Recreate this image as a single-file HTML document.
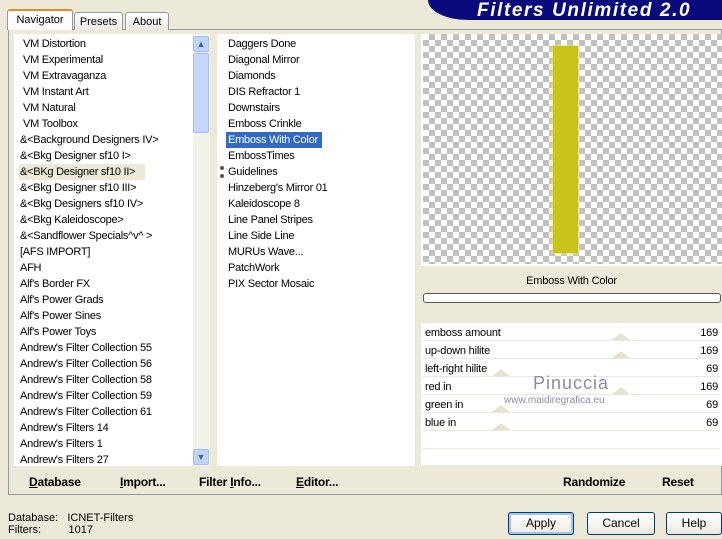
<!DOCTYPE html><html><head><style>
*{margin:0;padding:0;box-sizing:border-box}
body{width:722px;height:539px;background:#ece9d8;font-family:"Liberation Sans",sans-serif;font-size:11px;color:#000;position:relative;overflow:hidden}
.a{position:absolute}
.tab{position:absolute;top:12px;height:18px;border:1px solid #919b9c;border-bottom:none;background:linear-gradient(#fff,#ecebe5);border-radius:3px 3px 0 0;text-align:center;line-height:17px;font-size:11px}
.list div{height:16px;line-height:16px;white-space:nowrap;letter-spacing:-0.25px}
.chk{background-color:#fff;background-image:linear-gradient(45deg,#c0c0c0 25%,transparent 25%,transparent 75%,#c0c0c0 75%),linear-gradient(45deg,#c0c0c0 25%,transparent 25%,transparent 75%,#c0c0c0 75%);background-size:12px 12px;background-position:0 0,6px 6px}
.row{position:absolute;left:422px;width:298px;height:17px;background:#fff;line-height:19px;border-bottom:1px solid #ece9d8;letter-spacing:-0.2px}
.row span{position:absolute;left:3px}.row b{position:absolute;right:2px;font-weight:normal}
.tri{position:absolute;width:0;height:0;border-left:9px solid transparent;border-right:9px solid transparent;border-bottom:7px solid #e6e2d2;bottom:0}
.btn{position:absolute;top:512px;height:23px;border:1px solid #003c74;border-radius:3px;background:linear-gradient(#fff,#ece9e0);text-align:center;line-height:21px;font-size:12px}
.bb{position:absolute;top:475px;font-weight:bold;font-size:12px;letter-spacing:-0.2px}
</style></head><body>
<div class="a" style="left:428px;top:0;width:294px;height:20px;background:#0a0a7d;border-radius:0 0 0 40px/0 0 0 20px"></div>
<div class="a" style="left:477px;top:0;font:italic bold 19px 'Liberation Sans',sans-serif;color:#fff;letter-spacing:1.6px">Filters Unlimited 2.0</div>
<div class="a" style="left:8px;top:29px;width:714px;height:466px;border:1px solid #919b9c;background:#fcfcfe"></div>
<div class="tab" style="left:7px;top:9px;width:66px;height:21px;background:#fcfcfe;border-top:2px solid #e68b2c;z-index:2;line-height:19px">Navigator</div>
<div class="tab" style="left:74px;width:49px;line-height:19px">Presets</div>
<div class="tab" style="left:125px;width:44px;line-height:19px">About</div>
<div class="a" style="left:9px;top:30px;width:712px;height:464px;background:#ece9d8"></div>
<div class="a list" style="left:14px;top:34px;width:180px;height:432px;background:#fff;padding-top:2px">
<div style="padding-left:9px">VM Distortion</div><div style="padding-left:9px">VM Experimental</div><div style="padding-left:9px">VM Extravaganza</div><div style="padding-left:9px">VM Instant Art</div><div style="padding-left:9px">VM Natural</div><div style="padding-left:9px">VM Toolbox</div>
<div style="padding-left:6px">&amp;&lt;Background Designers IV&gt;</div><div style="padding-left:6px">&amp;&lt;Bkg Designer sf10 I&gt;</div><div style="padding-left:6px;background:#ece9d8;width:126px;margin-left:5px;padding-left:1px">&amp;&lt;BKg Designer sf10 II&gt;</div><div style="padding-left:6px">&amp;&lt;Bkg Designer sf10 III&gt;</div><div style="padding-left:6px">&amp;&lt;Bkg Designers sf10 IV&gt;</div><div style="padding-left:6px">&amp;&lt;Bkg Kaleidoscope&gt;</div><div style="padding-left:6px">&amp;&lt;Sandflower Specials^v^ &gt;</div><div style="padding-left:6px">[AFS IMPORT]</div><div style="padding-left:6px">AFH</div><div style="padding-left:6px">Alf's Border FX</div><div style="padding-left:6px">Alf's Power Grads</div><div style="padding-left:6px">Alf's Power Sines</div><div style="padding-left:6px">Alf's Power Toys</div><div style="padding-left:6px">Andrew's Filter Collection 55</div><div style="padding-left:6px">Andrew's Filter Collection 56</div><div style="padding-left:6px">Andrew's Filter Collection 58</div><div style="padding-left:6px">Andrew's Filter Collection 59</div><div style="padding-left:6px">Andrew's Filter Collection 61</div><div style="padding-left:6px">Andrew's Filters 14</div><div style="padding-left:6px">Andrew's Filters 1</div><div style="padding-left:6px">Andrew's Filters 27</div>
</div>
<div class="a" style="left:193px;top:34px;width:17px;height:432px;background:#f3f2ea"></div>
<div class="a" style="left:193px;top:36px;width:16px;height:16px;background:#c1d3fb;border:1px solid #a8bdf2;border-radius:2px;text-align:center;font-size:9px;line-height:14px;color:#4d6185">&#9650;</div>
<div class="a" style="left:193px;top:53px;width:16px;height:80px;background:#c6d5fb;border:1px solid #a8bdf2;border-radius:2px"></div>
<div class="a" style="left:193px;top:449px;width:16px;height:16px;background:#c1d3fb;border:1px solid #a8bdf2;border-radius:2px;text-align:center;font-size:9px;line-height:14px;color:#4d6185">&#9660;</div>
<div class="a list" style="left:217px;top:34px;width:198px;height:432px;background:#fff;padding-top:2px;padding-left:11px">
<div>Daggers Done</div><div>Diagonal Mirror</div><div>Diamonds</div><div>DIS Refractor 1</div><div>Downstairs</div><div>Emboss Crinkle</div><div style="background:#316ac5;color:#fff;width:96px;margin-left:-2px;padding-left:2px">Emboss With Color</div><div>EmbossTimes</div><div>Guidelines</div><div>Hinzeberg's Mirror 01</div><div>Kaleidoscope 8</div><div>Line Panel Stripes</div><div>Line Side Line</div><div>MURUs Wave...</div><div>PatchWork</div><div>PIX Sector Mosaic</div>
</div>
<div class="a" style="left:220px;top:166px;width:4px;height:12px;border-top:4px dotted #555;border-bottom:4px dotted #555"></div>
<div class="a" style="left:421px;top:34px;width:301px;height:432px;background:#fff"></div>
<div class="a chk" style="left:423px;top:34px;width:299px;height:230px"></div>
<div class="a" style="left:553px;top:46px;width:25px;height:207px;background:#c9c41a;box-shadow:0 0 3px 1px #e4e080"></div>
<div class="a" style="left:421px;top:266px;width:301px;height:57px;background:#ece9d8"></div>
<div class="a" style="left:421px;top:275px;width:301px;text-align:center;font-size:11px;letter-spacing:-0.2px">Emboss With Color</div>
<div class="a" style="left:423px;top:293px;width:298px;height:10px;border:1px solid #555;border-radius:3px;background:#fff"></div>
<div class="row" style="top:324px"><div class="tri" style="left:190px"></div><span>emboss amount</span><b>169</b></div>
<div class="row" style="top:342px"><div class="tri" style="left:190px"></div><span>up-down hilite</span><b>169</b></div>
<div class="row" style="top:360px"><div class="tri" style="left:70px"></div><span>left-right hilite</span><b>69</b></div>
<div class="row" style="top:378px"><div class="tri" style="left:190px"></div><span>red in</span><b>169</b></div>
<div class="row" style="top:396px"><div class="tri" style="left:70px"></div><span>green in</span><b>69</b></div>
<div class="row" style="top:414px"><div class="tri" style="left:70px"></div><span>blue in</span><b>69</b></div>
<div class="row" style="top:432px"></div><div class="row" style="top:450px;height:16px"></div>
<div class="a" style="left:533px;top:373px;font-size:18px;color:#8e8aa8;letter-spacing:1px">Pinuccia</div>
<div class="a" style="left:504px;top:395px;font-size:10px;color:#8e8aa8">www.maidiregrafica.eu</div>
<div class="bb" style="left:29px"><u>D</u>atabase</div>
<div class="bb" style="left:120px"><u>I</u>mport...</div>
<div class="bb" style="left:199px">Filter <u>I</u>nfo...</div>
<div class="bb" style="left:296px"><u>E</u>ditor...</div>
<div class="bb" style="left:563px">Randomize</div>
<div class="bb" style="left:662px">Reset</div>
<div class="a" style="left:8px;top:512px;line-height:12px">Database:&nbsp;&nbsp; ICNET-Filters<br>Filters:&nbsp;&nbsp;&nbsp;&nbsp;&nbsp;&nbsp;&nbsp;&nbsp; 1017</div>
<div class="btn" style="left:508px;width:66px;box-shadow:inset 0 0 0 2px #a7c1ef">Apply</div>
<div class="btn" style="left:587px;width:68px">Cancel</div>
<div class="btn" style="left:666px;width:56px">Help</div>
</body></html>
